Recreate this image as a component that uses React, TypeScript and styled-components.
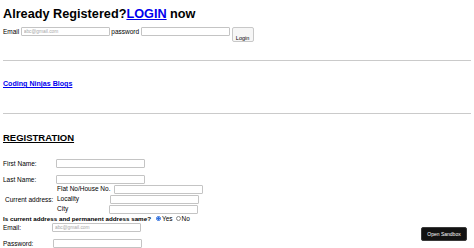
import { createGlobalStyle, styled } from "styled-components"

const GlobalStyle = createGlobalStyle`
  html, body {
    margin: 0;
    padding: 0;
    background: #ffffff;
  }
  body {
    font-family: "Liberation Sans", Arial, sans-serif;
    font-size: 6.5px;
    color: #000000;
    overflow: hidden;
  }
`

function App() {
  return (
    <>
      <GlobalStyle />
      <Page>
        <Title>
          Already Registered?<TitleLink href="#">LOGIN</TitleLink> now
        </Title>
        <LoginRow>
          <Label>Email</Label>
          <Input placeholder="abc@gmail.com" />
          <Label>password</Label>
          <Input type="password" />
          <LoginButton>Login</LoginButton>
        </LoginRow>
        <Divider $top={18} />
        <BlogLink href="#">Coding Ninjas Blogs</BlogLink>
        <Divider $top={25} />
        <Heading>REGISTRATION</Heading>

        <FormRow $top={16}>
          <FieldLabel $width={53}>First Name:</FieldLabel>
          <Input />
        </FormRow>
        <FormRow $top={7}>
          <FieldLabel $width={53}>Last Name:</FieldLabel>
          <Input />
        </FormRow>

        <AddressBlock>
          <AddressLabel>Current address:</AddressLabel>
          <AddressFields>
            <AddressRow>
              <SubLabel $width={57}>Flat No/House No.</SubLabel>
              <Input />
            </AddressRow>
            <AddressRow>
              <SubLabel $width={53}>Locality</SubLabel>
              <Input />
            </AddressRow>
            <AddressRow>
              <SubLabel $width={52}>City</SubLabel>
              <Input />
            </AddressRow>
          </AddressFields>
        </AddressBlock>

        <Question>
          Is current address and permanent address same?
          <RadioGroup>
            <Radio type="radio" name="same" defaultChecked />
            <RadioText>Yes</RadioText>
            <Radio type="radio" name="same" />
            <RadioText>No</RadioText>
          </RadioGroup>
        </Question>

        <FormRow $top={0}>
          <FieldLabel $width={49}>Email:</FieldLabel>
          <Input placeholder="abc@gmail.com" />
        </FormRow>
        <FormRow $top={7}>
          <FieldLabel $width={50}>Password:</FieldLabel>
          <Input type="password" />
        </FormRow>
      </Page>
      <SandboxButton>Open Sandbox</SandboxButton>
    </>
  )
}

export default App

const Page = styled.div`
  padding: 0 3px;
  display: flex;
  flex-direction: column;
  align-items: flex-start;
`
const Title = styled.h2`
  margin: 7px 0 0;
  font-size: 12.7px;
  line-height: 15px;
  font-weight: bold;
`
const TitleLink = styled.a`
  color: #0000ee;
  text-decoration: underline;
`
const LoginRow = styled.div`
  margin-top: 5px;
  display: flex;
  flex-direction: row;
  align-items: flex-start;
  gap: 1.5px;
  height: 15px;
`
const Label = styled.span`
  line-height: 9px;
`
const Input = styled.input`
  box-sizing: border-box;
  width: 89px;
  height: 9px;
  margin: 0;
  padding: 0 2px;
  border: 1px solid #c4c4c4;
  border-radius: 1px;
  font-family: "Liberation Sans", Arial, sans-serif;
  font-size: 4.8px;
  background: #ffffff;
  &::placeholder {
    color: #a8a8a8;
  }
`
const LoginButton = styled.button`
  box-sizing: border-box;
  width: 22px;
  height: 15px;
  margin: 0 0 0 0.5px;
  padding: 7px 0 0;
  border: 1px solid #c8c8c8;
  border-radius: 2px;
  background: #f6f6f6;
  font-family: "Liberation Sans", Arial, sans-serif;
  font-size: 5.5px;
  line-height: 6px;
  color: #000000;
`
const Divider = styled.hr<{ $top: number }>`
  align-self: stretch;
  margin: ${(p) => p.$top}px 0 0;
  border: none;
  border-top: 1px solid #cacaca;
  height: 0;
`
const BlogLink = styled.a`
  margin-top: 19px;
  font-size: 7.1px;
  line-height: 8px;
  font-weight: bold;
  color: #0000ee;
  text-decoration: underline;
`
const Heading = styled.h3`
  margin: 18px 0 0;
  font-size: 9.5px;
  line-height: 11px;
  font-weight: bold;
  text-decoration: underline;
`
const FormRow = styled.div<{ $top: number }>`
  margin-top: ${(p) => p.$top}px;
  display: flex;
  flex-direction: row;
  align-items: center;
  height: 9px;
`
const FieldLabel = styled.span<{ $width: number }>`
  width: ${(p) => p.$width}px;
  flex-shrink: 0;
`
const AddressBlock = styled.div`
  margin-top: 1px;
  display: flex;
  flex-direction: row;
  align-items: center;
`
const AddressLabel = styled.span`
  width: 54px;
  padding-left: 2px;
  box-sizing: border-box;
`
const AddressFields = styled.div`
  display: flex;
  flex-direction: column;
  gap: 1px;
`
const AddressRow = styled.div`
  display: flex;
  flex-direction: row;
  align-items: flex-start;
  height: 9px;
`
const SubLabel = styled.span<{ $width: number }>`
  width: ${(p) => p.$width}px;
  flex-shrink: 0;
  line-height: 8px;
`
const Question = styled.div`
  display: flex;
  flex-direction: row;
  align-items: center;
  font-weight: bold;
  font-size: 6.25px;
  height: 9px;
`
const RadioGroup = styled.span`
  display: inline-flex;
  align-items: center;
  margin-left: 5px;
  font-weight: normal;
  font-size: 6.5px;
`
const Radio = styled.input`
  appearance: none;
  box-sizing: border-box;
  width: 5px;
  height: 5px;
  margin: 0 1px 0 0;
  border: 0.7px solid #8a8a8a;
  border-radius: 50%;
  background: #ffffff;
  &:checked {
    border: 1.3px solid #2f6fde;
    background: radial-gradient(circle, #2f6fde 55%, #ffffff 60%);
  }
`
const RadioText = styled.span`
  margin-right: 3px;
`
const SandboxButton = styled.button`
  position: fixed;
  right: 7px;
  bottom: 7px;
  width: 46px;
  height: 14px;
  padding: 0;
  border: 1px solid #3a3a3a;
  border-radius: 2px;
  background: #121212;
  color: #ffffff;
  font-family: "Liberation Sans", Arial, sans-serif;
  font-size: 5px;
`
